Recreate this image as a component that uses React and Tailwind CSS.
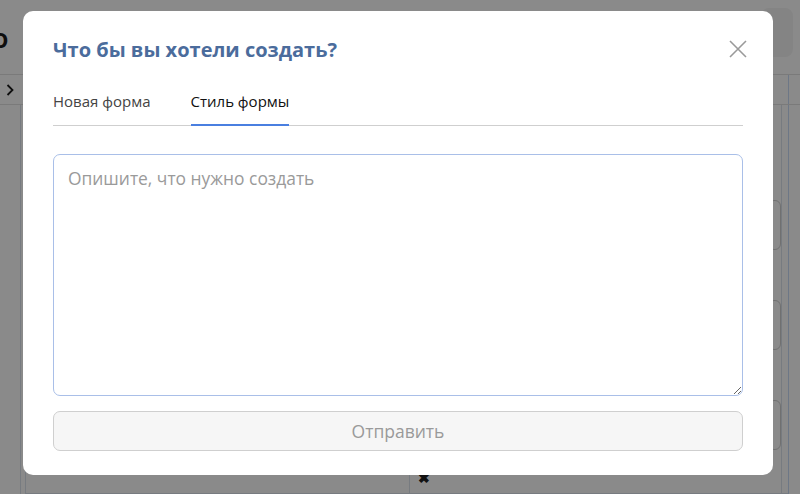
import React from 'react';

const font = { fontFamily: '"Open Sans", "Noto Sans", sans-serif' };

const PageBehind = () => (
  <div className="w-[800px] h-[494px] bg-white overflow-hidden flex flex-col">
    {/* Header */}
    <div className="h-[75px] flex items-start justify-between border-b border-[#e2e2e2]">
      <span className="text-[22px] font-bold text-[#1b1b1b] ml-[-9px] mt-[28px] leading-none">O</span>
      <div className="mt-[8px] mr-[7px] w-[32px] h-[49px] rounded-[8px] bg-[#f4f4f4] flex items-center">
        <span className="ml-[3px] text-[14px] text-[#333]">d</span>
      </div>
    </div>
    {/* Breadcrumb row */}
    <div className="h-[30px] flex items-center justify-between border-b border-[#e2e2e2]">
      <svg className="ml-[6px]" width="8" height="12" viewBox="0 0 8 12" fill="none">
        <path d="M1.5 1L6.5 6L1.5 11" stroke="#1b1b1b" strokeWidth="1.8" />
      </svg>
      <div className="h-full w-[12px] border-l border-[#c9dcf7]" />
    </div>
    {/* Main */}
    <div className="flex-1 flex pl-[20px]">
      <div className="flex-1 flex border-l border-[#dde3ec]">
        <div className="flex-1 ml-[4px] border-l border-b border-[#dde3ec] flex">
          <div className="w-[384px] border-r border-[#dde3ec]" />
          <div className="flex-1 flex flex-col justify-end pl-[8px] pb-[8px]">
            <span className="text-[#222] text-[14px] font-bold leading-none">✖</span>
          </div>
          <div className="w-[14px] flex flex-col gap-[50px] pt-[95px] border-r border-[#dde3ec] mr-[6px]">
            <div className="h-[50px] rounded-[6px] border border-[#d0d0d0]" />
            <div className="h-[50px] rounded-[6px] border border-[#d0d0d0]" />
            <div className="h-[50px] rounded-[6px] border border-[#d0d0d0]" />
          </div>
        </div>
        <div className="w-[12px] border-l border-[#c9dcf7]" />
      </div>
    </div>
  </div>
);

const App = () => {
  return (
    <div className="relative w-[800px] h-[494px] overflow-hidden" style={font}>
      <PageBehind />

      {/* Overlay */}
      <div className="absolute inset-0 bg-black/[0.46] flex items-start pl-[23px] pt-[11px]">
        {/* Modal */}
        <div className="w-[750px] h-[464px] bg-white rounded-[10px] px-[30px] pt-[25px] pb-[24px] flex flex-col">
          <div className="flex items-center justify-between h-[28px]">
            <h2 className="text-[20px] font-bold text-[#4b6c9c] leading-[28px]">
              Что бы вы хотели создать?
            </h2>
            <button className="mr-[-4px] mt-[-2px] text-[#9a9a9a]">
              <svg width="18" height="18" viewBox="0 0 18 18" fill="none">
                <path d="M1 1L17 17M17 1L1 17" stroke="currentColor" strokeWidth="1.6" />
              </svg>
            </button>
          </div>

          {/* Tabs */}
          <div className="mt-[26px] flex gap-[40px] border-b border-[#cfcfcf]">
            <button className="pb-[12px] text-[15px] leading-[22px] text-[#444] border-b-2 border-transparent mb-[-1px]">
              Новая форма
            </button>
            <button className="pb-[12px] text-[15px] leading-[22px] text-[#111] border-b-2 border-[#4a7fe0] mb-[-1px]">
              Стиль формы
            </button>
          </div>

          <textarea
            placeholder="Опишите, что нужно создать"
            className="mt-[28px] h-[243px] w-full rounded-[7px] border border-[#a9bfe8] px-[14px] pt-[11px] text-[17.4px] leading-[24px] text-[#333] placeholder:text-[#9a9a9a] outline-none"
          />

          <button
            disabled
            className="mt-[15px] h-[40px] w-full rounded-[7px] border border-[#cfcfcf] bg-[#f6f6f6] text-[17.5px] text-[#9a9a9a]"
          >
            Отправить
          </button>
        </div>
      </div>
    </div>
  );
};

export default App;
